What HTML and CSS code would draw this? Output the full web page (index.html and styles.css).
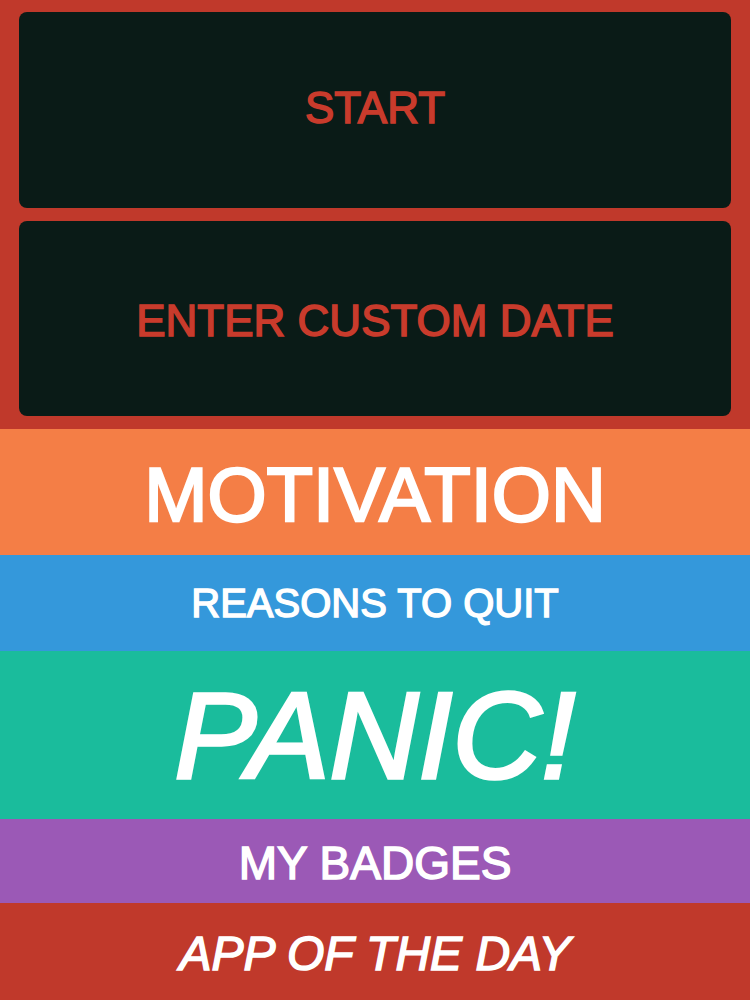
FILE: index.html
```html
<!DOCTYPE html>
<html>
<head>
<meta charset="utf-8">
<link rel="stylesheet" href="styles.css">
</head>
<body>
<div class="screen">
  <div class="top">
    <div class="card card-start"><span>START</span></div>
    <div class="card card-date"><span>ENTER CUSTOM DATE</span></div>
  </div>
  <div class="band band-motivation"><span>MOTIVATION</span></div>
  <div class="band band-reasons"><span>REASONS TO QUIT</span></div>
  <div class="band band-panic"><span>PANIC!</span></div>
  <div class="band band-badges"><span>MY BADGES</span></div>
  <div class="band band-app"><span>APP OF THE DAY</span></div>
</div>
</body>
</html>
```
FILE: styles.css
```css
html, body {
  margin: 0;
  padding: 0;
  background: #c0392b;
}
.screen {
  width: 750px;
  height: 1000px;
  display: flex;
  flex-direction: column;
  font-family: "Liberation Sans", Arial, sans-serif;
  overflow: hidden;
}
.top {
  background: #c0392b;
  padding: 12px 19px 13px 19px;
  display: flex;
  flex-direction: column;
  gap: 13px;
}
.card {
  background: #0a1b17;
  border-radius: 8px;
  display: flex;
  align-items: center;
  justify-content: center;
  color: #c93b2c;
  font-size: 44px;
  line-height: 1;
  -webkit-text-stroke: 1.5px #c93b2c;
}
.card-start { height: 196px; }
.card-start span { position: relative; top: -2px; }
.card-date { height: 195px; }
.card-date span { position: relative; top: 2px; }
.band {
  display: flex;
  align-items: center;
  justify-content: center;
  color: #ffffff;
  line-height: 1;
}
.band-motivation {
  background: #f47e46;
  height: 126px;
  font-size: 76px;
  -webkit-text-stroke: 2.4px #ffffff;
}
.band-motivation span { position: relative; top: 3px; }
.band-reasons {
  background: #3498db;
  height: 96px;
  font-size: 40px;
  -webkit-text-stroke: 1.4px #ffffff;
}
.band-panic {
  background: #1abc9c;
  height: 168px;
  font-size: 123px;
  font-style: italic;
  -webkit-text-stroke: 3.4px #ffffff;
}
.band-badges {
  background: #9b59b6;
  height: 84px;
  font-size: 46px;
  -webkit-text-stroke: 1.5px #ffffff;
}
.band-badges span { position: relative; top: 2px; }
.band-app {
  background: #c0392b;
  height: 97px;
  font-size: 48px;
  font-style: italic;
  -webkit-text-stroke: 1.5px #ffffff;
}
.band-app span { position: relative; top: 2px; }
```
